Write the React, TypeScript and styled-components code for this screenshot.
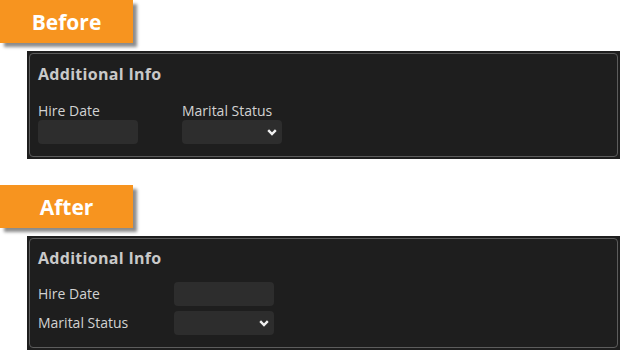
import React from "react";
import styled, { createGlobalStyle } from "styled-components";

const GlobalStyle = createGlobalStyle`
    body {
        margin: 0;
        background: #ffffff;
        font-family: "Open Sans", "Liberation Sans", sans-serif;
    }
`;

const Page = styled.div`
    display: flex;
    flex-direction: column;
    width: 628px;
`;

const Tag = styled.div<{ $gapTop?: number }>`
    width: 133px;
    height: 43px;
    margin-top: ${(p) => p.$gapTop ?? 0}px;
    display: flex;
    align-items: center;
    justify-content: center;
    background: #f7941f;
    color: #ffffff;
    font-size: 21px;
    font-weight: 700;
    box-shadow: 4px 4px 3px rgba(0, 0, 0, 0.45);
`;

const Frame = styled.div`
    margin: 8px 0 0 27px;
    width: 593px;
    padding: 2px;
    box-sizing: border-box;
    background: #1e1e1e;
`;

const Fieldset = styled.div<{ $padTop: number; $padBottom: number }>`
    border: 1px solid #5c5c5c;
    border-radius: 4px;
    padding: ${(p) => p.$padTop}px 8px ${(p) => p.$padBottom}px 8px;
`;

const Title = styled.div`
    color: #c9c9c9;
    font-size: 16px;
    font-weight: 700;
    letter-spacing: 0.3px;
    line-height: 22px;
`;

const FieldRow = styled.div`
    display: flex;
    gap: 44px;
    margin-top: 16px;
`;

const Field = styled.div`
    display: flex;
    flex-direction: column;
`;

const Label = styled.div<{ $inline?: boolean }>`
    color: #d2d2d2;
    font-size: 14px;
    line-height: ${(p) => (p.$inline ? "24px" : "19px")};
`;

const Grid = styled.div`
    display: grid;
    grid-template-columns: 136px 100px;
    row-gap: 5px;
    margin-top: 13px;
`;

const InputBox = styled.div`
    width: 100px;
    height: 24px;
    border-radius: 4px;
    background: #2d2d2d;
`;

const SelectBox = styled(InputBox)`
    display: flex;
    align-items: center;
    justify-content: flex-end;
    padding-right: 5px;
    box-sizing: border-box;
`;

const Chevron = () => (
    <svg width="10" height="7" viewBox="0 0 10 7">
        <path d="M1.2 1.2 L5 5 L8.8 1.2" fill="none" stroke="#f0f0f0" strokeWidth="2.4" />
    </svg>
);

const Select = () => (
    <SelectBox>
        <Chevron />
    </SelectBox>
);

export default function App() {
    return (
        <Page>
            <GlobalStyle />
            <Tag>Before</Tag>
            <Frame>
                <Fieldset $padTop={9} $padBottom={12}>
                    <Title>Additional Info</Title>
                    <FieldRow>
                        <Field>
                            <Label>Hire Date</Label>
                            <InputBox />
                        </Field>
                        <Field>
                            <Label>Marital Status</Label>
                            <Select />
                        </Field>
                    </FieldRow>
                </Fieldset>
            </Frame>
            <Tag $gapTop={26}>After</Tag>
            <Frame>
                <Fieldset $padTop={8} $padBottom={12}>
                    <Title>Additional Info</Title>
                    <Grid>
                        <Label $inline>Hire Date</Label>
                        <InputBox />
                        <Label $inline>Marital Status</Label>
                        <Select />
                    </Grid>
                </Fieldset>
            </Frame>
        </Page>
    );
}
